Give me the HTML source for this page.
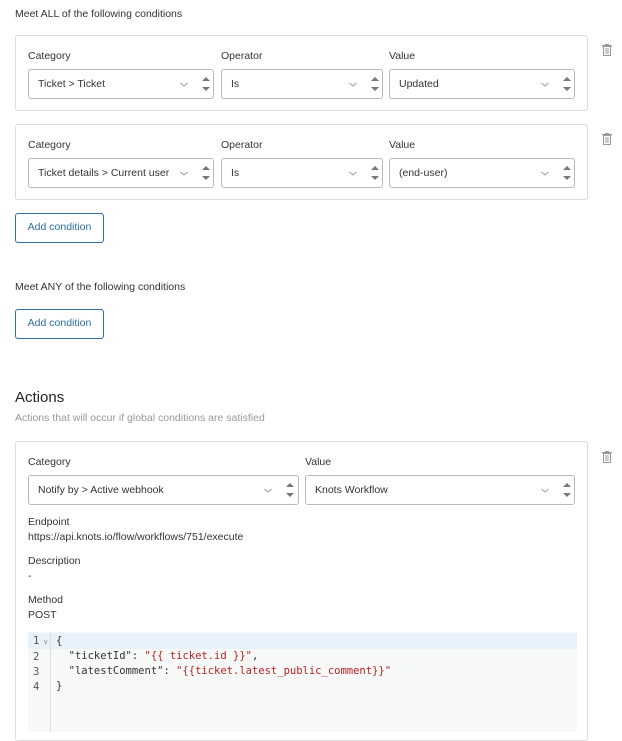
<!DOCTYPE html>
<html><head><meta charset="utf-8">
<style>
*{box-sizing:border-box;margin:0;padding:0}
body{width:622px;height:725px;overflow:hidden;background:#fff;font-family:"Liberation Sans",sans-serif;font-size:10.5px;color:#333;position:relative}
.a{position:absolute;white-space:nowrap}
.card{position:absolute;border:1px solid #dcdcdc;border-radius:3px;background:#fff}
.sel{position:absolute;height:30px;border:1px solid #b9b9b9;border-radius:3px;background:#fff}
.sel span{position:absolute;left:9px;top:8px;font-size:10.5px;color:#333}
.sel .chev{position:absolute;top:12px}
.sel .sp{position:absolute;top:4px;width:10px;height:20px}
.btn{position:absolute;width:89px;height:30px;border:1px solid #2d6fa8;border-radius:3px;color:#2d6fa8;font-size:10.5px;text-align:center;line-height:27px}
.trash{position:absolute;width:10px;height:12px}
.lab{position:absolute;font-size:10.5px;color:#333}
</style></head><body>

<div class="a" style="left:15px;top:8px">Meet ALL of the following conditions</div>

<div class="card" style="left:15px;top:35px;width:573px;height:76px"></div>
<div class="card" style="left:15px;top:124px;width:573px;height:76px"></div>

<svg class="trash" style="left:602px;top:44px" viewBox="0 0 10 12"><rect x="1.5" y="2.5" width="7" height="9" fill="none" stroke="#999"/><rect x="0" y="1" width="10" height="1.3" fill="#999"/><rect x="3" y="0" width="4" height="1.3" fill="#999"/><rect x="3.5" y="4" width="1" height="6" fill="#999"/><rect x="5.5" y="4" width="1" height="6" fill="#999"/></svg>
<svg class="trash" style="left:602px;top:133px" viewBox="0 0 10 12"><rect x="1.5" y="2.5" width="7" height="9" fill="none" stroke="#999"/><rect x="0" y="1" width="10" height="1.3" fill="#999"/><rect x="3" y="0" width="4" height="1.3" fill="#999"/><rect x="3.5" y="4" width="1" height="6" fill="#999"/><rect x="5.5" y="4" width="1" height="6" fill="#999"/></svg>
<svg class="trash" style="left:602px;top:451px" viewBox="0 0 10 12"><rect x="1.5" y="2.5" width="7" height="9" fill="none" stroke="#999"/><rect x="0" y="1" width="10" height="1.3" fill="#999"/><rect x="3" y="0" width="4" height="1.3" fill="#999"/><rect x="3.5" y="4" width="1" height="6" fill="#999"/><rect x="5.5" y="4" width="1" height="6" fill="#999"/></svg>

<!-- row 1 -->
<div class="lab" style="left:28px;top:50px">Category</div>
<div class="lab" style="left:221px;top:50px">Operator</div>
<div class="lab" style="left:389px;top:50px">Value</div>
<div class="sel" style="left:28px;top:69px;width:186px"><span>Ticket &gt; Ticket</span>
<svg class="chev" style="left:150px" width="10" height="6" viewBox="0 0 10 6"><path d="M1.5 1 L5 4 L8.5 1" fill="none" stroke="#999"/></svg>
<svg class="sp" style="left:172px" viewBox="0 0 10 20"><path d="M1 7 L5 3 L9 7Z M1 13 L9 13 L5 17Z" fill="#777"/></svg></div>
<div class="sel" style="left:221px;top:69px;width:162px"><span>Is</span>
<svg class="chev" style="left:126px" width="10" height="6" viewBox="0 0 10 6"><path d="M1.5 1 L5 4 L8.5 1" fill="none" stroke="#999"/></svg>
<svg class="sp" style="left:148px" viewBox="0 0 10 20"><path d="M1 7 L5 3 L9 7Z M1 13 L9 13 L5 17Z" fill="#777"/></svg></div>
<div class="sel" style="left:389px;top:69px;width:186px"><span>Updated</span>
<svg class="chev" style="left:150px" width="10" height="6" viewBox="0 0 10 6"><path d="M1.5 1 L5 4 L8.5 1" fill="none" stroke="#999"/></svg>
<svg class="sp" style="left:172px" viewBox="0 0 10 20"><path d="M1 7 L5 3 L9 7Z M1 13 L9 13 L5 17Z" fill="#777"/></svg></div>

<!-- row 2 -->
<div class="lab" style="left:28px;top:139px">Category</div>
<div class="lab" style="left:221px;top:139px">Operator</div>
<div class="lab" style="left:389px;top:139px">Value</div>
<div class="sel" style="left:28px;top:158px;width:186px"><span>Ticket details &gt; Current user</span>
<svg class="chev" style="left:150px" width="10" height="6" viewBox="0 0 10 6"><path d="M1.5 1 L5 4 L8.5 1" fill="none" stroke="#999"/></svg>
<svg class="sp" style="left:172px" viewBox="0 0 10 20"><path d="M1 7 L5 3 L9 7Z M1 13 L9 13 L5 17Z" fill="#777"/></svg></div>
<div class="sel" style="left:221px;top:158px;width:162px"><span>Is</span>
<svg class="chev" style="left:126px" width="10" height="6" viewBox="0 0 10 6"><path d="M1.5 1 L5 4 L8.5 1" fill="none" stroke="#999"/></svg>
<svg class="sp" style="left:148px" viewBox="0 0 10 20"><path d="M1 7 L5 3 L9 7Z M1 13 L9 13 L5 17Z" fill="#777"/></svg></div>
<div class="sel" style="left:389px;top:158px;width:186px"><span>(end-user)</span>
<svg class="chev" style="left:150px" width="10" height="6" viewBox="0 0 10 6"><path d="M1.5 1 L5 4 L8.5 1" fill="none" stroke="#999"/></svg>
<svg class="sp" style="left:172px" viewBox="0 0 10 20"><path d="M1 7 L5 3 L9 7Z M1 13 L9 13 L5 17Z" fill="#777"/></svg></div>

<div class="btn" style="left:15px;top:213px">Add condition</div>
<div class="a" style="left:15px;top:281px">Meet ANY of the following conditions</div>
<div class="btn" style="left:15px;top:309px">Add condition</div>

<div class="a" style="left:15px;top:389px;font-size:15px;color:#222">Actions</div>
<div class="a" style="left:15px;top:412px;color:#999;font-size:10.5px">Actions that will occur if global conditions are satisfied</div>

<div class="card" style="left:15px;top:441px;width:573px;height:300px"></div>
<div class="lab" style="left:28px;top:456px">Category</div>
<div class="lab" style="left:305px;top:456px">Value</div>
<div class="sel" style="left:28px;top:475px;width:271px"><span>Notify by &gt; Active webhook</span>
<svg class="chev" style="left:234px" width="10" height="6" viewBox="0 0 10 6"><path d="M1.5 1 L5 4 L8.5 1" fill="none" stroke="#999"/></svg>
<svg class="sp" style="left:256px" viewBox="0 0 10 20"><path d="M1 7 L5 3 L9 7Z M1 13 L9 13 L5 17Z" fill="#777"/></svg></div>
<div class="sel" style="left:305px;top:475px;width:270px"><span>Knots Workflow</span>
<svg class="chev" style="left:234px" width="10" height="6" viewBox="0 0 10 6"><path d="M1.5 1 L5 4 L8.5 1" fill="none" stroke="#999"/></svg>
<svg class="sp" style="left:256px" viewBox="0 0 10 20"><path d="M1 7 L5 3 L9 7Z M1 13 L9 13 L5 17Z" fill="#777"/></svg></div>

<div class="lab" style="left:28px;top:516px">Endpoint</div>
<div class="lab" style="left:28px;top:531px">https://api.knots.io/flow/workflows/751/execute</div>
<div class="lab" style="left:28px;top:555px">Description</div>
<div class="lab" style="left:28px;top:570px">-</div>
<div class="lab" style="left:28px;top:594px">Method</div>
<div class="lab" style="left:28px;top:609px">POST</div>

<div style="position:absolute;left:28px;top:632px;width:549px;height:100px;background:#f7f8f8"></div>
<div style="position:absolute;left:28px;top:633px;width:549px;height:16px;background:#e8f2fb"></div>
<div style="position:absolute;left:50px;top:632px;width:1px;height:100px;background:#ddd"></div>
<div style="position:absolute;left:28px;top:634px;font-family:'DejaVu Sans Mono',monospace;font-size:10.5px;line-height:15px;color:#555">
<div style="position:absolute;left:5px;top:0;white-space:pre">1<span style="font-size:7px;color:#888"> v</span>
2
3
4</div>
<div style="position:absolute;left:28px;top:0;white-space:pre;color:#333">{
  "ticketId": <span style="color:#b22">"{{ ticket.id }}"</span>,
  "latestComment": <span style="color:#b22">"{{ticket.latest_public_comment}}"</span>
}</div>
</div>

</body></html>
